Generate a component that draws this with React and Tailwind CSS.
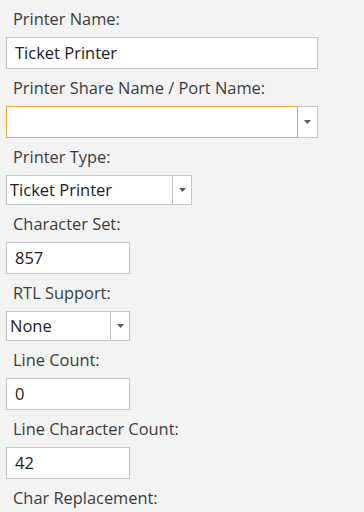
import * as React from 'react';

const font = { fontFamily: '"Open Sans", "Noto Sans", sans-serif' };

function Label({ children }) {
  return (
    <div className="flex h-[37px] items-center pl-[7px] pt-[1px] text-[16.4px] text-[#3c3c3c]">
      {children}
    </div>
  );
}

function TextBox({ value, wide }) {
  return (
    <div
      className={`flex h-[32px] items-center border border-[#c6c6c6] bg-white pl-[8px] text-[16.5px] text-[#222] ${
        wide ? 'w-[312px]' : 'w-[124px]'
      }`}
    >
      {value}
    </div>
  );
}

function Arrow() {
  return (
    <svg width="7" height="4" viewBox="0 0 7 4">
      <path d="M0 0 L7 0 L3.5 4 Z" fill="#5a5a5a" />
    </svg>
  );
}

function Combo({ value, width, height = 'h-[30px]', focused }) {
  return (
    <div className={`flex ${height} ${width} bg-white`}>
      <div
        className={`flex flex-1 items-center pl-[3px] text-[16.5px] text-[#222] border ${
          focused ? 'border-[#eea63c]' : 'border-[#c6c6c6] border-r-0'
        }`}
      >
        {value}
      </div>
      <div
        className={`flex w-[20px] items-center justify-center border border-[#c6c6c6] ${
          focused ? 'border-l-0' : ''
        }`}
      >
        <Arrow />
      </div>
    </div>
  );
}

export default function App() {
  return (
    <div className="h-[512px] w-[364px] overflow-hidden bg-[#f3f3f3] pl-[6px]" style={font}>
      <Label>Printer Name:</Label>
      <TextBox value="Ticket Printer" wide />
      <Label>Printer Share Name / Port Name:</Label>
      <Combo value="" width="w-[312px]" height="h-[32px]" focused />
      <Label>Printer Type:</Label>
      <Combo value="Ticket Printer" width="w-[186px]" />
      <Label>Character Set:</Label>
      <TextBox value="857" />
      <Label>RTL Support:</Label>
      <Combo value="None" width="w-[124px]" />
      <Label>Line Count:</Label>
      <TextBox value="0" />
      <Label>Line Character Count:</Label>
      <TextBox value="42" />
      <Label>Char Replacement:</Label>
    </div>
  );
}
